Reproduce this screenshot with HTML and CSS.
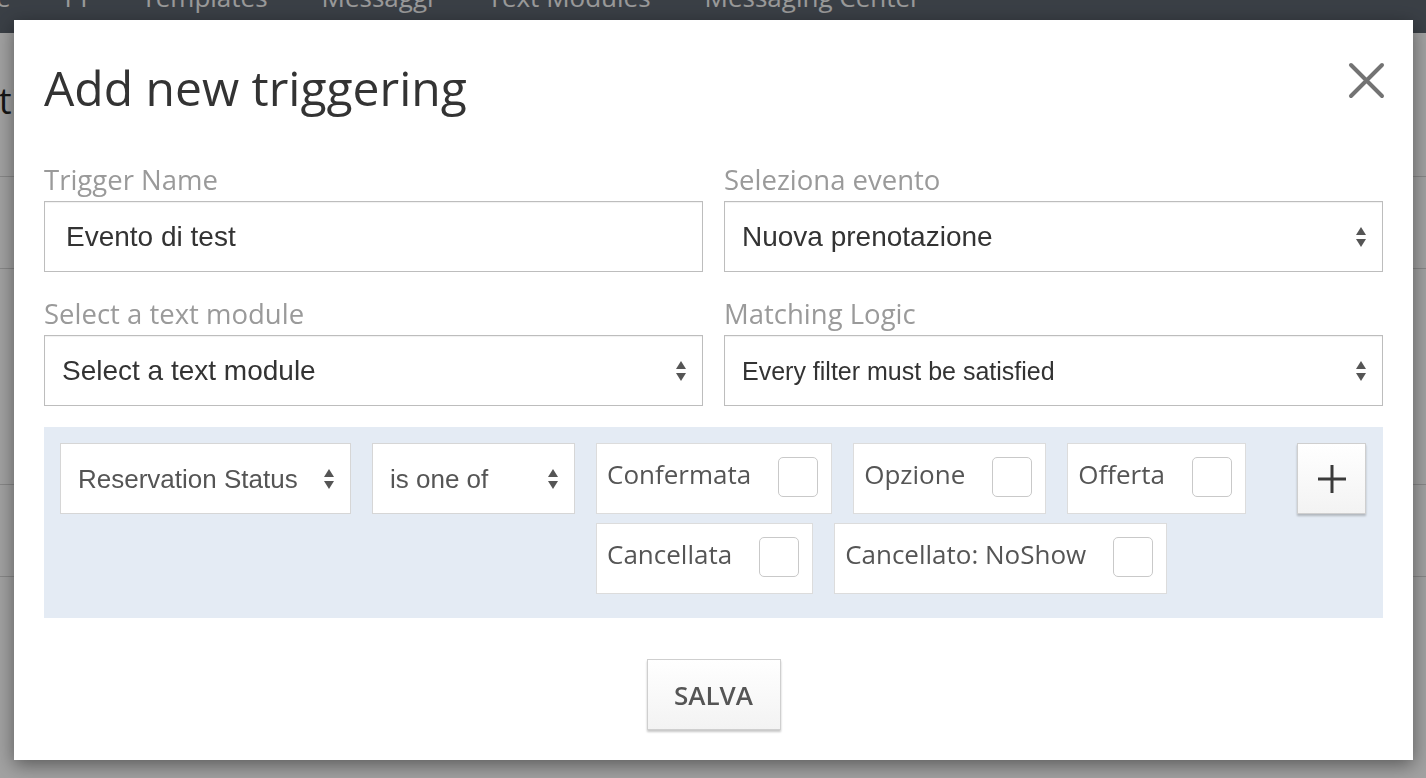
FILE: index.html
```html
<!DOCTYPE html>
<html lang="it">
<head>
    <meta charset="UTF-8">
    <meta name="viewport" content="width=device-width, initial-scale=1.0">
    <title>Add new triggering</title>
    <link rel="stylesheet" href="styles.css">
</head>
<body>
    <header class="topbar">
        <nav class="topnav">
            <a href="#">Home</a>
            <a href="#">PI</a>
            <a href="#">Templates</a>
            <a href="#">Messaggi</a>
            <a href="#">Text Modules</a>
            <a href="#">Messaging Center</a>
        </nav>
    </header>

    <main class="page">
        <h2 class="page-title">Notifiche</h2>
        <div class="page-row row-a"></div>
        <div class="page-row row-b"></div>
        <div class="page-row row-c"></div>
        <div class="page-row row-b"></div>
    </main>

    <div class="backdrop"></div>

    <div class="modal">
        <div class="modal-header">
            <h1>Add new triggering</h1>
            <button class="close-btn" title="Chiudi">
                <svg width="37" height="37" viewBox="0 0 37 37">
                    <path d="M3 3 L34 34 M34 3 L3 34" stroke="#737373" stroke-width="4" stroke-linecap="round"/>
                </svg>
            </button>
        </div>

        <div class="modal-body">
            <div class="form-grid">
                <div class="field">
                    <label for="name">Trigger Name</label>
                    <input type="text" id="name" class="form-input" value="Evento di test">
                </div>
                <div class="field">
                    <label for="evento">Seleziona evento</label>
                    <div class="select-wrap">
                        <select id="evento" class="form-select">
                            <option>Nuova prenotazione</option>
                        </select>
                        <svg class="caret" width="10" height="22" viewBox="0 0 10 22"><path d="M0 9 L5 1 L10 9 Z M0 13 L5 21 L10 13 Z" fill="#555"/></svg>
                    </div>
                </div>
                <div class="field">
                    <label for="modulo">Select a text module</label>
                    <div class="select-wrap">
                        <select id="modulo" class="form-select">
                            <option>Select a text module</option>
                        </select>
                        <svg class="caret" width="10" height="22" viewBox="0 0 10 22"><path d="M0 9 L5 1 L10 9 Z M0 13 L5 21 L10 13 Z" fill="#555"/></svg>
                    </div>
                </div>
                <div class="field">
                    <label for="logic">Matching Logic</label>
                    <div class="select-wrap">
                        <select id="logic" class="form-select small-text">
                            <option>Every filter must be satisfied</option>
                        </select>
                        <svg class="caret" width="10" height="22" viewBox="0 0 10 22"><path d="M0 9 L5 1 L10 9 Z M0 13 L5 21 L10 13 Z" fill="#555"/></svg>
                    </div>
                </div>
            </div>

            <div class="filter-box">
                <div class="select-wrap filter-field">
                    <select class="filter-select">
                        <option>Reservation Status</option>
                    </select>
                    <svg class="caret" width="10" height="22" viewBox="0 0 10 22"><path d="M0 9 L5 1 L10 9 Z M0 13 L5 21 L10 13 Z" fill="#555"/></svg>
                </div>
                <div class="select-wrap filter-op">
                    <select class="filter-select">
                        <option>is one of</option>
                    </select>
                    <svg class="caret" width="10" height="22" viewBox="0 0 10 22"><path d="M0 9 L5 1 L10 9 Z M0 13 L5 21 L10 13 Z" fill="#555"/></svg>
                </div>
                <div class="options">
                    <label class="option"><span>Confermata</span><input type="checkbox"></label>
                    <label class="option"><span>Opzione</span><input type="checkbox"></label>
                    <label class="option"><span>Offerta</span><input type="checkbox"></label>
                    <label class="option"><span>Cancellata</span><input type="checkbox"></label>
                    <label class="option"><span>Cancellato: NoShow</span><input type="checkbox"></label>
                </div>
                <button class="add-btn" title="Aggiungi filtro">
                    <svg width="30" height="30" viewBox="0 0 30 30">
                        <path d="M15 1 V29 M1 15 H29" stroke="#3a3a3a" stroke-width="3"/>
                    </svg>
                </button>
            </div>
        </div>

        <div class="modal-footer">
            <button class="save-btn">Salva</button>
        </div>
    </div>
</body>
</html>
```

FILE: styles.css
```css
* {
    box-sizing: border-box;
}
body {
    margin: 0;
    height: 778px;
    overflow: hidden;
    font-family: 'Open Sans', 'Liberation Sans', sans-serif;
    background: #fff;
}

/* page behind the modal */
.topbar {
    height: 33px;
    background: #5c646e;
    overflow: hidden;
}
.topnav {
    display: flex;
    gap: 54px;
    margin-top: -16px;
    margin-left: -63px;
}
.topnav a {
    font-size: 26px;
    line-height: 26px;
    color: #f2f2f2;
    text-decoration: none;
    white-space: nowrap;
}
.page-title {
    width: 64px;
    overflow: hidden;
    white-space: nowrap;
    margin: 48px 0 0 -50px;
    font-size: 36px;
    font-weight: 400;
    line-height: 40px;
    color: #222;
}
.page-row {
    border-bottom: 1px solid #d6d6d6;
}
.row-a { height: 56px; }
.row-b { height: 92px; }
.row-c { height: 216px; }
.backdrop {
    position: fixed;
    inset: 0;
    background: rgba(0,0,0,0.37);
}

/* modal */
.modal {
    position: fixed;
    left: 14px;
    top: 20px;
    width: 1399px;
    background: #fff;
    box-shadow: 0 5px 18px rgba(0,0,0,0.45);
}
.modal-header {
    display: flex;
    justify-content: space-between;
    align-items: flex-start;
    padding: 40px 28px 0 30px;
}
.modal-header h1 {
    margin: 0;
    font-size: 48px;
    font-weight: 400;
    line-height: 56px;
    color: #333;
}
.close-btn {
    margin-top: 2px;
    padding: 0;
    border: none;
    background: none;
    cursor: pointer;
    line-height: 0;
}
.modal-body {
    padding: 46px 30px 0;
}
.form-grid {
    display: grid;
    grid-template-columns: 1fr 1fr;
    gap: 24px 21px;
}
.field label {
    display: block;
    margin-bottom: 3px;
    font-size: 27.5px;
    line-height: 36px;
    color: #9a9a9a;
}
.form-input,
.form-select {
    display: block;
    width: 100%;
    height: 71px;
    margin: 0;
    padding: 0 21px;
    font-family: 'Liberation Sans', Arial, sans-serif;
    font-size: 28px;
    color: #333;
    background: #fff;
    border: 1px solid #bdbdbd;
    border-radius: 0;
    box-shadow: inset 0 1px 1px rgba(0,0,0,0.06);
    outline: none;
}
.form-select {
    padding-left: 17px;
    appearance: none;
    -webkit-appearance: none;
}
.form-select.small-text {
    font-size: 25px;
}
.select-wrap {
    position: relative;
}
.caret {
    position: absolute;
    right: 17px;
    top: 50%;
    transform: translateY(-50%);
    pointer-events: none;
}

/* filter row */
.filter-box {
    display: flex;
    align-items: flex-start;
    gap: 21px;
    margin-top: 21px;
    padding: 16px 17px 24px 16px;
    background: #e4ebf4;
}
.filter-field {
    flex: 0 0 291px;
}
.filter-op {
    flex: 0 0 203px;
}
.filter-select {
    display: block;
    width: 100%;
    height: 71px;
    margin: 0;
    padding: 0 17px;
    font-family: 'Liberation Sans', Arial, sans-serif;
    font-size: 26px;
    color: #555;
    background: #fff;
    border: 1px solid #d6d6d6;
    border-radius: 0;
    appearance: none;
    -webkit-appearance: none;
}
.options {
    flex: 1;
    display: flex;
    flex-wrap: wrap;
    gap: 9px 21px;
}
.option {
    display: flex;
    align-items: flex-start;
    gap: 27px;
    height: 71px;
    padding: 13px 13px 0 10px;
    background: #fff;
    border: 1px solid #dcdcdc;
    cursor: pointer;
}
.option span {
    font-size: 26px;
    line-height: 34px;
    color: #555;
    white-space: nowrap;
}
.option input[type="checkbox"] {
    appearance: none;
    -webkit-appearance: none;
    flex: 0 0 40px;
    width: 40px;
    height: 40px;
    margin: 0;
    background: #fff;
    border: 1px solid #c9c9c9;
    border-radius: 5px;
    cursor: pointer;
}
.add-btn {
    flex: 0 0 69px;
    height: 71px;
    padding: 0;
    display: flex;
    align-items: center;
    justify-content: center;
    background: linear-gradient(#fff, #f3f3f3);
    border: 1px solid #cfcfcf;
    box-shadow: 0 2px 2px rgba(0,0,0,0.22);
    cursor: pointer;
}

/* footer */
.modal-footer {
    display: flex;
    justify-content: center;
    padding: 41px 0 30px;
}
.save-btn {
    width: 134px;
    height: 71px;
    font-family: 'Open Sans', sans-serif;
    font-size: 26px;
    font-weight: 600;
    text-transform: uppercase;
    color: #555;
    background: linear-gradient(#fff, #f3f3f3);
    border: 1px solid #cfcfcf;
    box-shadow: 0 2px 2px rgba(0,0,0,0.22);
    cursor: pointer;
}
```
